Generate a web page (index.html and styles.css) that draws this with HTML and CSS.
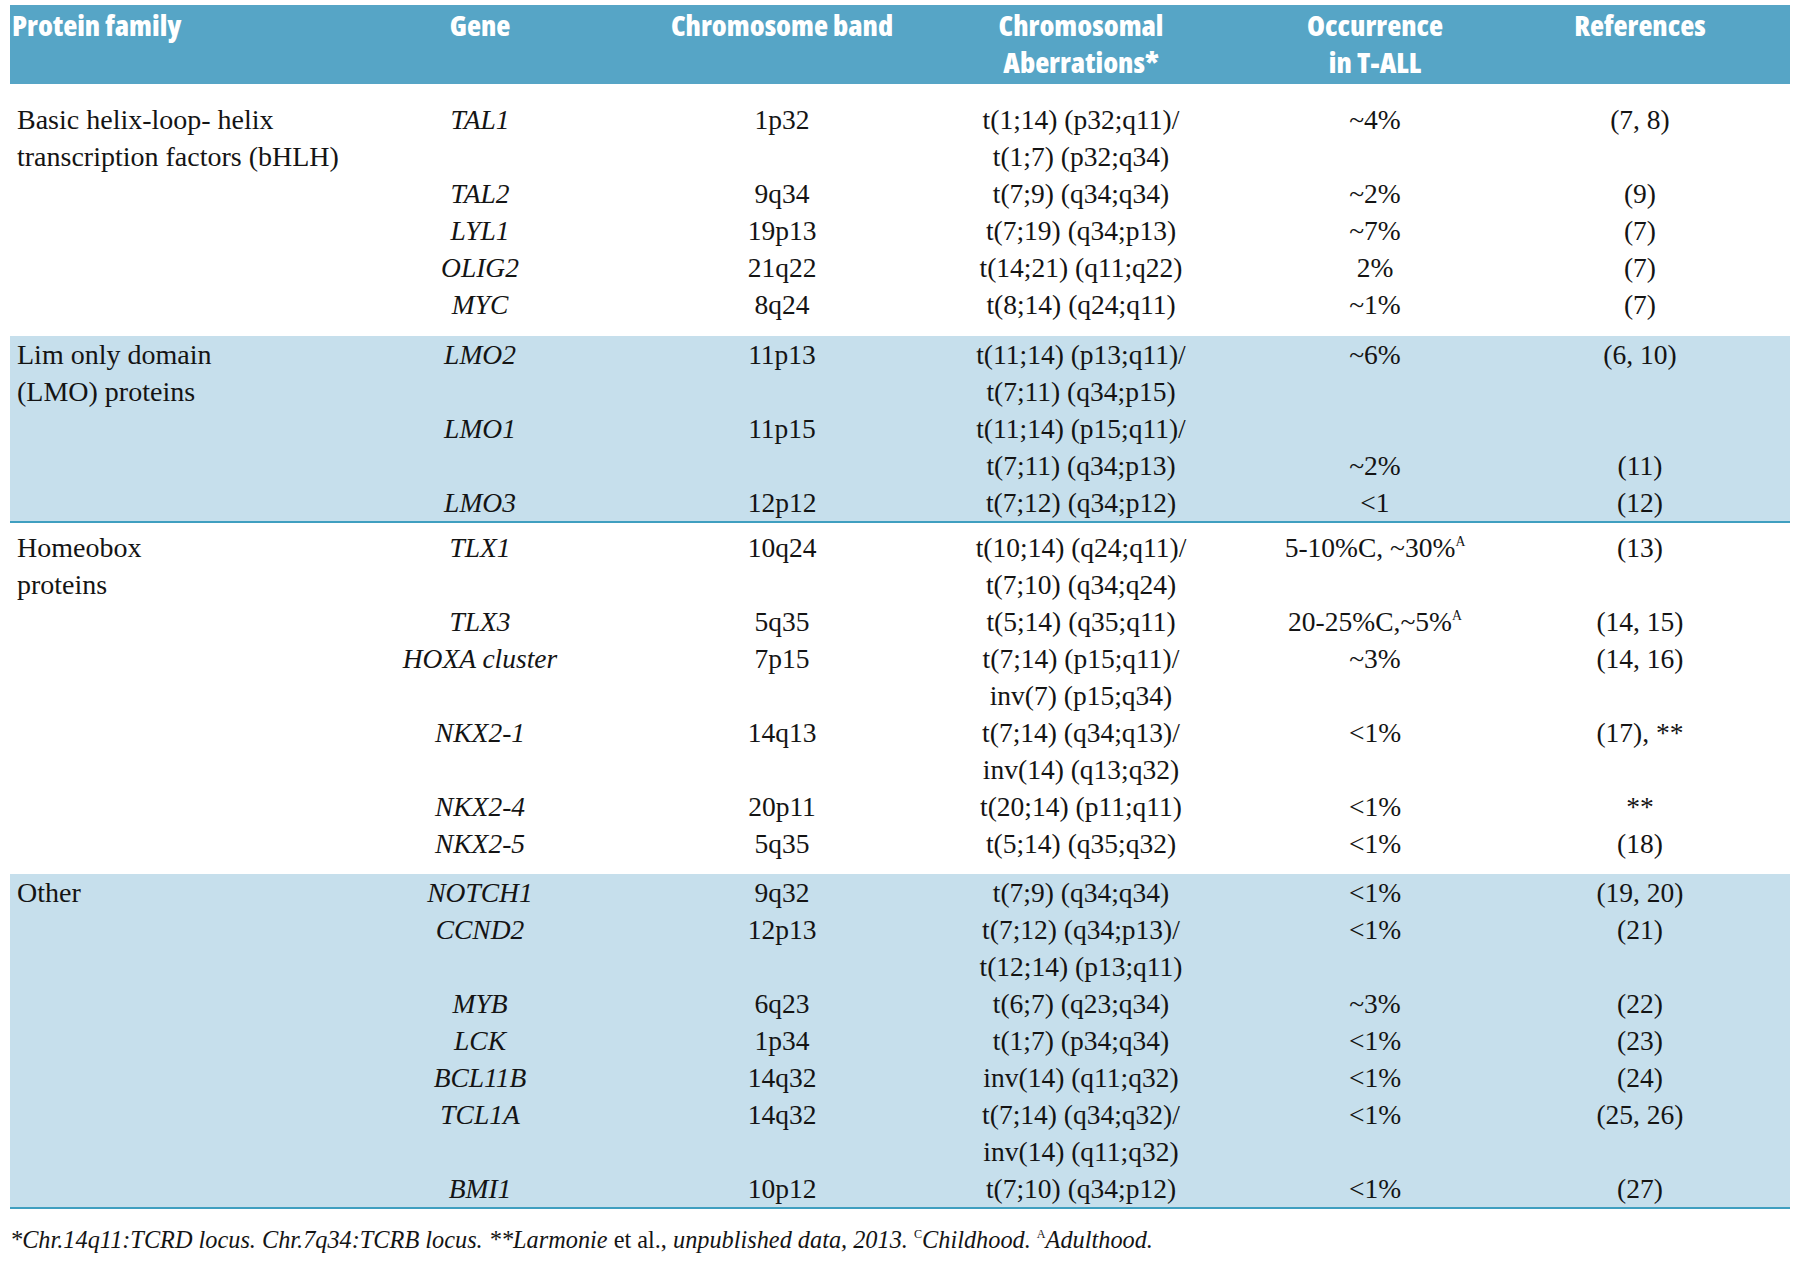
FILE: index.html
```html
<!DOCTYPE html>
<html lang="en">
<head>
<meta charset="utf-8">
<title>T-ALL oncogenic transcription factors</title>
<link rel="stylesheet" href="styles.css">
</head>
<body>
<div class="page">
  <div class="table">
    <div class="head grid">
      <div class="c fam">Protein family</div>
      <div class="c">Gene</div>
      <div class="c">Chromosome band</div>
      <div class="c">Chromosomal<br>Aberrations*</div>
      <div class="c">Occurrence<br>in T-ALL</div>
      <div class="c">References</div>
    </div>

    <div class="sec grid s1">
      <div class="c fam span5">Basic helix-loop- helix<br>transcription factors (bHLH)</div>
      <div class="c gene">TAL1</div><div class="c">1p32</div><div class="c">t(1;14) (p32;q11)/<br>t(1;7) (p32;q34)</div><div class="c">~4%</div><div class="c">(7, 8)</div>
      <div class="c gene">TAL2</div><div class="c">9q34</div><div class="c">t(7;9) (q34;q34)</div><div class="c">~2%</div><div class="c">(9)</div>
      <div class="c gene">LYL1</div><div class="c">19p13</div><div class="c">t(7;19) (q34;p13)</div><div class="c">~7%</div><div class="c">(7)</div>
      <div class="c gene">OLIG2</div><div class="c">21q22</div><div class="c">t(14;21) (q11;q22)</div><div class="c">2%</div><div class="c">(7)</div>
      <div class="c gene">MYC</div><div class="c">8q24</div><div class="c">t(8;14) (q24;q11)</div><div class="c">~1%</div><div class="c">(7)</div>
    </div>

    <div class="sec grid band s2">
      <div class="c fam span3">Lim only domain<br>(LMO) proteins</div>
      <div class="c gene">LMO2</div><div class="c">11p13</div><div class="c">t(11;14) (p13;q11)/<br>t(7;11) (q34;p15)</div><div class="c">~6%</div><div class="c">(6, 10)</div>
      <div class="c gene">LMO1</div><div class="c">11p15</div><div class="c">t(11;14) (p15;q11)/<br>t(7;11) (q34;p13)</div><div class="c low">~2%</div><div class="c low">(11)</div>
      <div class="c gene">LMO3</div><div class="c">12p12</div><div class="c">t(7;12) (q34;p12)</div><div class="c">&lt;1</div><div class="c">(12)</div>
    </div>

    <div class="sec grid s3">
      <div class="c fam span6">Homeobox<br>proteins</div>
      <div class="c gene">TLX1</div><div class="c">10q24</div><div class="c">t(10;14) (q24;q11)/<br>t(7;10) (q34;q24)</div><div class="c">5-10%C, ~30%<span class="sup">A</span></div><div class="c">(13)</div>
      <div class="c gene">TLX3</div><div class="c">5q35</div><div class="c">t(5;14) (q35;q11)</div><div class="c">20-25%C,~5%<span class="sup">A</span></div><div class="c">(14, 15)</div>
      <div class="c gene">HOXA cluster</div><div class="c">7p15</div><div class="c">t(7;14) (p15;q11)/<br>inv(7) (p15;q34)</div><div class="c">~3%</div><div class="c">(14, 16)</div>
      <div class="c gene">NKX2-1</div><div class="c">14q13</div><div class="c">t(7;14) (q34;q13)/<br>inv(14) (q13;q32)</div><div class="c">&lt;1%</div><div class="c">(17), **</div>
      <div class="c gene">NKX2-4</div><div class="c">20p11</div><div class="c">t(20;14) (p11;q11)</div><div class="c">&lt;1%</div><div class="c">**</div>
      <div class="c gene">NKX2-5</div><div class="c">5q35</div><div class="c">t(5;14) (q35;q32)</div><div class="c">&lt;1%</div><div class="c">(18)</div>
    </div>

    <div class="sec grid band s4">
      <div class="c fam span7">Other</div>
      <div class="c gene">NOTCH1</div><div class="c">9q32</div><div class="c">t(7;9) (q34;q34)</div><div class="c">&lt;1%</div><div class="c">(19, 20)</div>
      <div class="c gene">CCND2</div><div class="c">12p13</div><div class="c">t(7;12) (q34;p13)/<br>t(12;14) (p13;q11)</div><div class="c">&lt;1%</div><div class="c">(21)</div>
      <div class="c gene">MYB</div><div class="c">6q23</div><div class="c">t(6;7) (q23;q34)</div><div class="c">~3%</div><div class="c">(22)</div>
      <div class="c gene">LCK</div><div class="c">1p34</div><div class="c">t(1;7) (p34;q34)</div><div class="c">&lt;1%</div><div class="c">(23)</div>
      <div class="c gene">BCL11B</div><div class="c">14q32</div><div class="c">inv(14) (q11;q32)</div><div class="c">&lt;1%</div><div class="c">(24)</div>
      <div class="c gene">TCL1A</div><div class="c">14q32</div><div class="c">t(7;14) (q34;q32)/<br>inv(14) (q11;q32)</div><div class="c">&lt;1%</div><div class="c">(25, 26)</div>
      <div class="c gene">BMI1</div><div class="c">10p12</div><div class="c">t(7;10) (q34;p12)</div><div class="c">&lt;1%</div><div class="c">(27)</div>
    </div>
  </div>

  <p class="note"><span class="it">*Chr.14q11:TCRD locus. Chr.7q34:TCRB locus. **Larmonie</span> et al., <span class="it">unpublished data, 2013. </span><span class="sup">C</span><span class="it">Childhood. </span><span class="sup">A</span><span class="it">Adulthood.</span></p>
</div>
</body>
</html>
```

FILE: styles.css
```css
html, body {
  margin: 0;
  padding: 0;
  background: #ffffff;
}

.page {
  padding: 5px 10px 0 10px;
  color: #141414;
  font-family: "Liberation Serif", "Times New Roman", serif;
}

.table {
  width: 1780px;
}

.grid {
  display: grid;
  grid-template-columns: 330px 280px 324px 274px 314px 216px;
  padding-right: 42px;
}

.c {
  text-align: center;
  white-space: nowrap;
}

.c.fam {
  text-align: left;
}

.head {
  background: #56a5c6;
  color: #ffffff;
  font-family: "Open Sans", "Noto Sans", "DejaVu Sans Condensed", sans-serif;
  font-stretch: 75%;
  font-weight: 800;
  font-size: 29px;
  line-height: 37px;
  padding: 1px 0 4px 0;
}

.head .fam {
  padding-left: 2px;
}

.sec {
  font-size: 27.5px;
  line-height: 37px;
}

.sec .fam {
  padding-left: 7px;
  font-size: 28px;
}

.gene {
  font-style: italic;
}

.low {
  align-self: end;
}

.band {
  background: #c6dfec;
  border-bottom: 2px solid #3f9fc0;
}

.s1 {
  padding-top: 17px;
  padding-bottom: 13px;
}

.s3 {
  padding-top: 6px;
  padding-bottom: 12px;
}

.span3 { grid-row: span 3; }
.span5 { grid-row: span 5; }
.span6 { grid-row: span 6; }
.span7 { grid-row: span 7; }

.sup {
  font-size: 0.5em;
  line-height: 0;
  vertical-align: 0.8em;
}

.note {
  margin: 16px 0 0 0;
  font-size: 24.3px;
  line-height: 30px;
  white-space: nowrap;
}

.it {
  font-style: italic;
}
```
